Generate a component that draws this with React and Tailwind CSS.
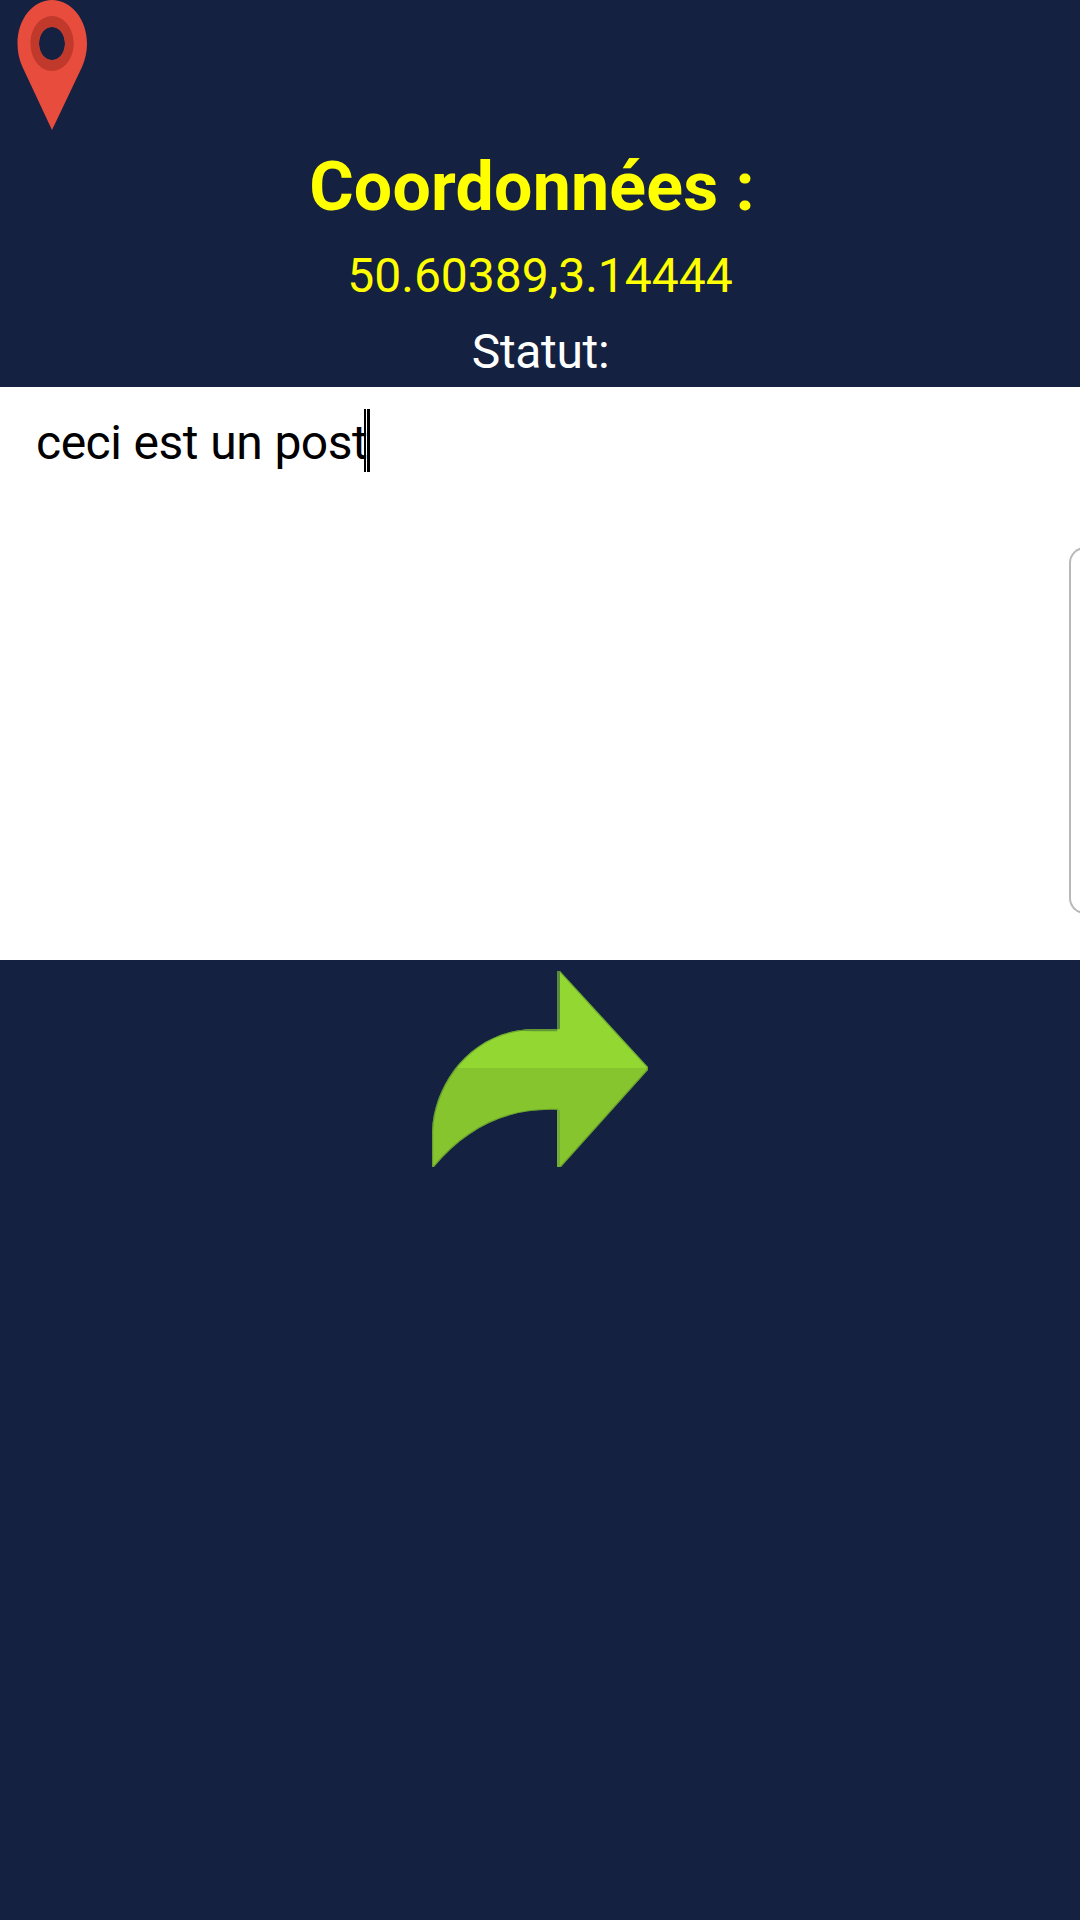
const ARROW = "M125 0H128L216 96V99L129 196H125V139C73 137 34 158 2 196H0V160C2 110 42 58 103 58H125Z";

function MapPin() {
  return (
    <svg className="ml-[17px] block h-[130px] w-[70px]" viewBox="0 0 70 130" aria-hidden="true">
      <path
        fill="#e84c3d"
        fillRule="evenodd"
        d="M35 0C54.3 0 70 19.5 70 43.5C70 52 68.2 60 65 67L35 130L5.5 67C2.2 60 .5 52 .5 43.5C.5 19.5 15.7 0 35 0ZM35 27C27.7 27 22 34.4 22 43.5S27.7 60 35 60S48 52.6 48 43.5S42.3 27 35 27Z"
      />
      <path
        fill="#c0392b"
        fillRule="evenodd"
        d="M35 16C46.8 16 56.7 28.3 56.7 43.5S46.8 71 35 71S13.5 58.7 13.5 43.5S23.2 16 35 16ZM35 27C27.7 27 22 34.4 22 43.5S27.7 60 35 60S48 52.6 48 43.5S42.3 27 35 27Z"
      />
    </svg>
  );
}

function ShareArrow() {
  return (
    <svg className="block h-[196px] w-[216px]" viewBox="0 0 216 196" aria-hidden="true">
      <defs>
        <clipPath id="arrow">
          <path d={ARROW} />
        </clipPath>
      </defs>
      <g clipPath="url(#arrow)">
        <rect width="216" height="98" fill="#93d832" />
        <rect y="97" width="216" height="99" fill="#86c52d" />
        <path d={ARROW} fill="none" stroke="#477c30" strokeOpacity="0.5" strokeWidth="2.5" />
        <path d="M126.5 0V58" stroke="#5a8b3c" strokeWidth="3" />
        <path d="M126.5 139V196" stroke="#75ac35" strokeWidth="3" />
        <path d="M76 59.3Q90 58.8 103 59.3H125" fill="none" stroke="#5f9636" strokeWidth="2" />
      </g>
    </svg>
  );
}

export default function App() {
  return (
    <main className="flex h-[1920px] w-[1080px] flex-col overflow-hidden bg-[#152141] font-['Roboto',sans-serif] text-[48px]">
      <header className="flex h-[387px] shrink-0 flex-col text-center text-[#ffff00]">
        <div className="h-[138px] shrink-0">
          <MapPin />
        </div>
        <h1 className="pr-[16px] text-[68px] leading-[98px] font-bold tracking-[0.22px]">Coordonnées :</h1>
        <p className="leading-[80px]">50.60389,3.14444</p>
        <p className="pl-px leading-[72px] tracking-[-0.35px] text-white">Statut:</p>
      </header>
      <section className="flex h-[573px] shrink-0 justify-between overflow-hidden bg-white text-black">
        <div className="mt-[22px] flex h-[63px] items-center pl-9">
          <span className="pt-[5px] leading-[68px] tracking-[-0.5px] [word-spacing:0.8px]">ceci est un post</span>
          <span className="-ml-[3px] flex h-[63px] gap-px">
            <span className="w-[2px] bg-black" />
            <span className="w-[3px] bg-black" />
          </span>
        </div>
        <div className="-mr-[13px] mt-[160px] h-[367px] w-[24px] rounded-l-[16px] border-2 border-r-0 border-[#b8b8b8]" />
      </section>
      <div className="mt-[11px] flex justify-center">
        <ShareArrow />
      </div>
    </main>
  );
}
